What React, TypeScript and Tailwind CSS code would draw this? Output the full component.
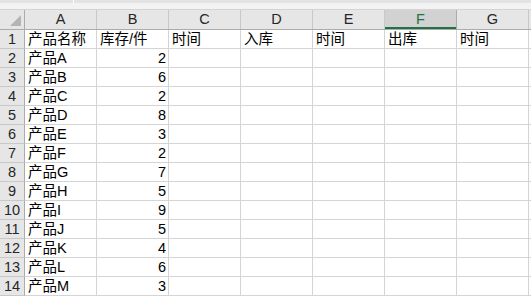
const cols = ["A", "B", "C", "D", "E", "F", "G"];

const rows: string[][] = [
  ["产品名称", "库存/件", "时间", "入库", "时间", "出库", "时间"],
  ["产品A", "2"],
  ["产品B", "6"],
  ["产品C", "2"],
  ["产品D", "8"],
  ["产品E", "3"],
  ["产品F", "2"],
  ["产品G", "7"],
  ["产品H", "5"],
  ["产品I", "9"],
  ["产品J", "5"],
  ["产品K", "4"],
  ["产品L", "6"],
  ["产品M", "3"],
];

const font = { fontFamily: '"Liberation Sans", "Noto Sans CJK SC", sans-serif' };

export default function App() {
  return (
    <div className="w-[531px] h-[297px] overflow-hidden bg-white text-[14.5px] text-black" style={font}>
      {/* formula bar remnant */}
      <div className="h-[10px] bg-[#f3f3f3] border-b border-[#d4d4d4] flex flex-col">
        <div className="h-[3px] flex gap-[1px] bg-white">
          <div className="w-[73px] bg-[#e3e3e3]" />
          <div className="flex-1 bg-[#e3e3e3]" />
        </div>
      </div>

      {/* column headers */}
      <div className="flex h-[20px] bg-[#e6e6e6] border-b border-[#ababab]">
        <div className="w-[25px] shrink-0 border-r border-[#ababab] relative">
          <div className="absolute right-[3px] bottom-[3px] w-0 h-0 border-l-[11px] border-l-transparent border-b-[11px] border-b-[#b4b4b4]" />
        </div>
        {cols.map((c) => (
          <div
            key={c}
            className={
              c === "F"
                ? "w-[72px] shrink-0 border-r border-[#ababab] bg-[#d2d2d2] text-[#217346] flex items-center justify-center leading-none shadow-[inset_0_-2px_0_#217346]"
                : "w-[72px] shrink-0 border-r border-[#c8c8c8] text-[#262626] flex items-center justify-center leading-none"
            }
          >
            {c}
          </div>
        ))}
        <div className="flex-1" />
      </div>

      {rows.map((r, i) => (
        <div key={i} className="flex h-[19px]">
          <div className="w-[25px] shrink-0 bg-[#e6e6e6] border-r border-b border-[#ababab] border-b-[#c8c8c8] flex items-center justify-center leading-none text-[#262626]">
            {i + 1}
          </div>
          {cols.map((c, j) => {
            const v = r[j] ?? "";
            const num = v !== "" && /^\d+$/.test(v);
            return (
              <div
                key={c}
                className={
                  num
                    ? "w-[72px] shrink-0 border-r border-b border-[#d4d4d4] flex items-center justify-end pr-[2px] leading-none whitespace-nowrap"
                    : "w-[72px] shrink-0 border-r border-b border-[#d4d4d4] flex items-center pl-[3px] leading-none whitespace-nowrap"
                }
              >
                {v}
              </div>
            );
          })}
          <div className="flex-1 border-b border-[#d4d4d4]" />
        </div>
      ))}
    </div>
  );
}
